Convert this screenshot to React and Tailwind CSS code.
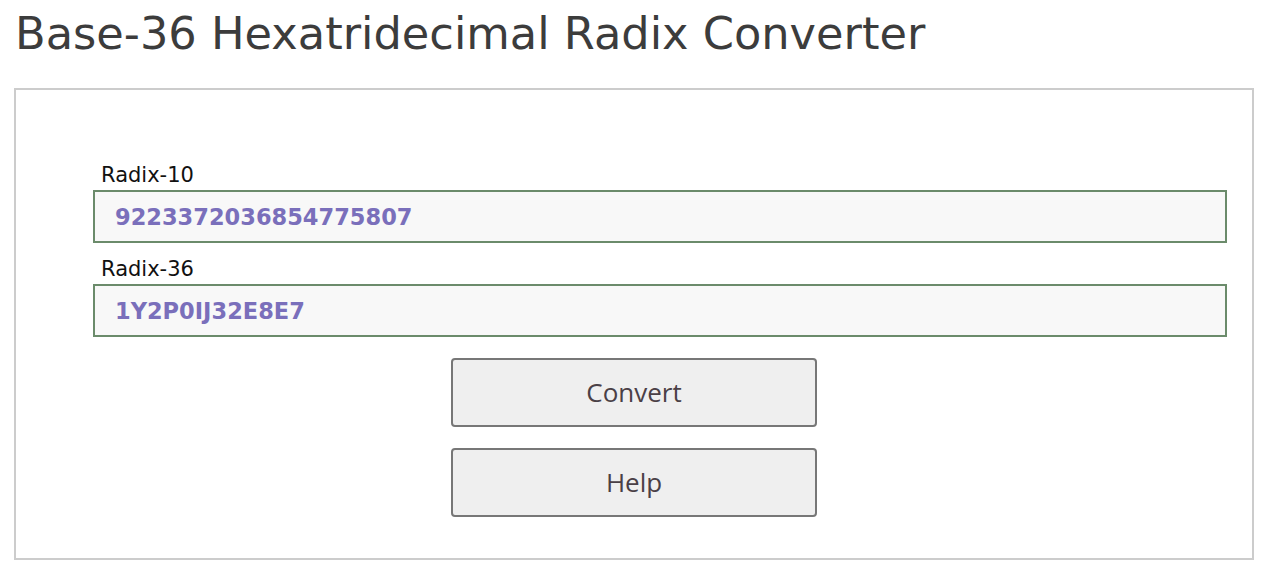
import { useState } from 'react';

const verdana = { fontFamily: '"DejaVu Sans", Verdana, sans-serif' };

function toBase36(dec) {
  try {
    return BigInt(dec).toString(36).toUpperCase();
  } catch {
    return '';
  }
}

export default function App() {
  const [radix10, setRadix10] = useState('9223372036854775807');
  const [radix36, setRadix36] = useState('1Y2P0IJ32E8E7');

  return (
    <div className="min-h-[572px] bg-white" style={verdana}>
      <h1 className="pt-[8px] pl-[15px] text-[44.7px] leading-[52px] text-[#3c3c3c] font-normal">
        Base-36 Hexatridecimal Radix Converter
      </h1>

      <div className="mt-[28px] ml-[14px] w-[1240px] h-[472px] border-2 border-[#cccccc] pt-[73px]">
        <div className="ml-[77px] mr-[25px] flex flex-col">
          <label className="pl-[8px] text-[21px] leading-[24px] text-[#111111] mb-[3px]">Radix-10</label>
          <input
            value={radix10}
            onChange={(e) => setRadix10(e.target.value)}
            className="h-[53px] border-2 border-[#6b8b6b] bg-[#f8f8f8] pl-[20px] text-[22.5px] font-bold text-[#7a6fbb] outline-none"
            style={verdana}
          />
          <label className="mt-[14px] pl-[8px] text-[21px] leading-[24px] text-[#111111] mb-[3px]">Radix-36</label>
          <input
            value={radix36}
            onChange={(e) => setRadix36(e.target.value)}
            className="h-[53px] border-2 border-[#6b8b6b] bg-[#f8f8f8] pl-[20px] text-[22.5px] font-bold text-[#7a6fbb] outline-none"
            style={verdana}
          />
        </div>

        <div className="mt-[21px] flex flex-col items-center gap-[21px]">
          {['Convert', 'Help'].map((label) => (
            <button
              key={label}
              onClick={() => label === 'Convert' && setRadix36(toBase36(radix10))}
              className="w-[366px] h-[69px] rounded-[4px] border-2 border-[#777777] bg-[#efefef] text-[26px] text-[#4a4046]"
              style={{ fontFamily: '"Open Sans", sans-serif' }}
            >
              {label}
            </button>
          ))}
        </div>
      </div>
    </div>
  );
}
